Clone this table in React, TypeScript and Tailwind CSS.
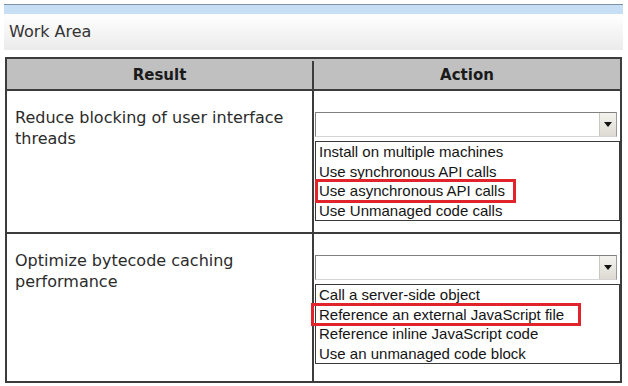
import React from "react";

const body = { fontFamily: '"DejaVu Sans", Verdana, sans-serif' };
const list = { fontFamily: '"Liberation Sans", Arial, sans-serif' };

function Select() {
  return (
    <div className="ml-[1px] w-[302px] h-[25px] flex justify-end border border-t-[#808080] border-l-[#808080] border-r-[#9a9a9a] border-b-[#d4d4d4] bg-white">
      <div className="w-[17px] h-full bg-linear-to-b from-[#f4f3ee] to-[#dcdad2] border-l border-[#c9c7bf] flex items-center justify-center">
        <svg width="8" height="5" viewBox="0 0 8 5">
          <polygon points="0,0 8,0 4,5" fill="#111" />
        </svg>
      </div>
    </div>
  );
}

function DropList({
  items,
  mark,
  markLeft,
  markWidth,
}: {
  items: string[];
  mark: number;
  markLeft: number;
  markWidth: number;
}) {
  return (
    <div
      className="ml-[1px] mt-[4px] w-[305px] border border-[#3a3a3a] bg-white text-[15px] leading-[19.5px] text-[#141414]"
      style={list}
    >
      {items.map((t, i) => (
        <div key={t} className="relative pl-[3px] whitespace-nowrap">
          {t}
          {i === mark && (
            <span
              className="absolute top-[-2px] bottom-[-2px] border-[3px] border-[#e1232b]"
              style={{ left: markLeft, width: markWidth }}
            />
          )}
        </div>
      ))}
    </div>
  );
}

function Row({
  lines,
  items,
  mark,
  markLeft,
  markWidth,
  h,
  last,
}: {
  lines: string[];
  items: string[];
  mark: number;
  markLeft: number;
  markWidth: number;
  h: string;
  last?: boolean;
}) {
  return (
    <div className={`grid grid-cols-[307px_306px] ${h} ${last ? "" : "border-b-2 border-[#3c3c3c]"}`}>
      <div className="border-r-2 border-[#3c3c3c] pl-[8px] pt-[16px] text-[16px] leading-[21px] text-[#2b2b2b]" style={body}>
        {lines.map((l) => (
          <div key={l}>{l}</div>
        ))}
      </div>
      <div className="pt-[21px]">
        <Select />
        <DropList items={items} mark={mark} markLeft={markLeft} markWidth={markWidth} />
      </div>
    </div>
  );
}

export default function App() {
  return (
    <div className="w-[628px] h-[386px] bg-white overflow-hidden">
      <div className="ml-[4px] pt-[4px] w-[619px]">
        <div className="h-[10px] border-t border-[#7b92ab] bg-[#c6dff5]" />
        <div
          className="h-[36px] bg-linear-to-b from-white to-[#ebebeb] pl-[5px] flex items-center text-[16px] text-[#333]"
          style={body}
        >
          Work Area
        </div>
      </div>
      <div className="ml-[5px] mt-[7px] w-[617px] border-2 border-[#3c3c3c]">
        <div className="grid grid-cols-[307px_306px] h-[32px] pt-[2px] bg-[#c0c0c0] border-b-2 border-[#3c3c3c] text-[15px] font-bold text-[#1a1a1a]" style={body}>
          <div className="border-r-2 border-[#3c3c3c] flex items-center justify-center">Result</div>
          <div className="flex items-center justify-center">Action</div>
        </div>
        <Row
          h="h-[143px]"
          lines={["Reduce blocking of user interface", "threads"]}
          items={[
            "Install on multiple machines",
            "Use synchronous API calls",
            "Use asynchronous API calls",
            "Use Unmanaged code calls",
          ]}
          mark={2}
          markLeft={-1}
          markWidth={201}
        />
        <Row
          h="h-[147px]"
          last
          lines={["Optimize bytecode caching", "performance"]}
          items={[
            "Call a server-side object",
            "Reference an external JavaScript file",
            "Reference inline JavaScript code",
            "Use an unmanaged code block",
          ]}
          mark={1}
          markLeft={-5}
          markWidth={270}
        />
      </div>
    </div>
  );
}
